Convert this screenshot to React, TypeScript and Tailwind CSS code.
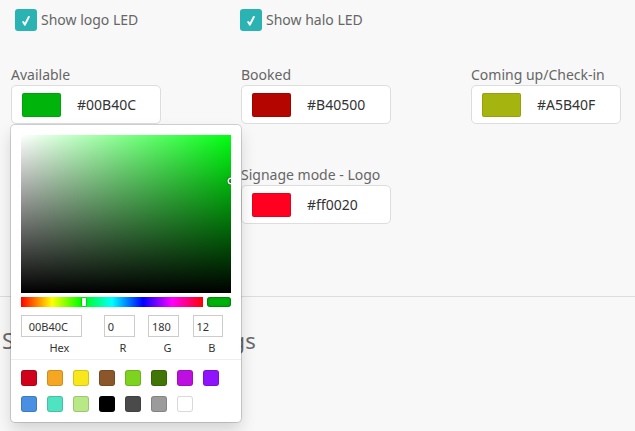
import React from "react";

function Check({ label, className = "" }: { label: string; className?: string }) {
  return (
    <div className={`flex items-center gap-[4px] ${className}`}>
      <div className="w-[22px] h-[22px] rounded-[3px] bg-[#2bb3b3] flex items-center justify-center">
        <svg width="22" height="22" viewBox="0 0 22 22">
          <path d="M8.2 13 L9.9 15.6 L13.8 8" fill="none" stroke="#fff" strokeWidth="2" strokeLinecap="round" strokeLinejoin="round" />
        </svg>
      </div>
      <span className="text-[14px] leading-[20px] text-[#666]">{label}</span>
    </div>
  );
}

function ColorField({ label, color, text }: { label: string; color: string; text: string }) {
  return (
    <div className="flex flex-col">
      <div className="h-[20px] leading-[20px] text-[14px] text-[#666]">{label}</div>
      <div className="w-[150px] h-[39px] bg-white border border-[#dddddd] rounded-[5px] flex items-center pl-[10px]">
        <div className="w-[39px] h-[24px] rounded-[2px] border border-black/10" style={{ backgroundColor: color }} />
        <span className="ml-[16px] text-[14px] text-[#333]">{text}</span>
      </div>
    </div>
  );
}

export default function App() {
  const presets = [
    "#D0021B", "#F5A623", "#F8E71C", "#8B572A", "#7ED321", "#417505", "#BD10E0", "#9013FE",
    "#4A90E2", "#50E3C2", "#B8E986", "#000000", "#4A4A4A", "#9B9B9B", "#FFFFFF",
  ];
  return (
    <div className="relative w-[635px] h-[431px] overflow-hidden bg-[#f8f8f8] font-['Noto_Sans',sans-serif] text-[#666]">
      <div className="flex pl-[15px] pt-[9px]">
        <Check label="Show logo LED" className="w-[225px]" />
        <Check label="Show halo LED" />
      </div>

      <div className="grid grid-cols-[230px_230px_150px] pl-[11px] mt-[34px] gap-y-[41px]">
        <ColorField label="Available" color="#00B40C" text="#00B40C" />
        <ColorField label="Booked" color="#B40500" text="#B40500" />
        <ColorField label="Coming up/Check-in" color="#A5B40F" text="#A5B40F" />
        <div />
        <ColorField label="Signage mode - Logo" color="#ff0020" text="#ff0020" />
      </div>

      <div className="mt-[72px] border-t border-[#dddddd]" />
      <div className="mt-[28px] pl-[2px] text-[22px] leading-[30px] tracking-[0.2px] text-[#6a6a6a]">Signage display settings</div>

      {/* Color picker popover */}
      <div className="absolute left-[11px] top-[125px] w-[230px] bg-white rounded-[4px] px-[10px] pt-[10px] shadow-[0_0_0_1px_rgba(0,0,0,0.15),0_8px_16px_rgba(0,0,0,0.15)]">
        <div className="relative w-[210px] h-[158px] overflow-hidden bg-[#00ff11]">
          <div className="absolute inset-0 bg-[linear-gradient(to_right,#fff,rgba(255,255,255,0))]" />
          <div className="absolute inset-0 bg-[linear-gradient(to_top,#000,rgba(0,0,0,0))]" />
          <div className="absolute left-[208px] top-[44px] w-[4px] h-[4px] rounded-full shadow-[0_0_0_1.5px_#fff,inset_0_0_1px_1px_rgba(0,0,0,0.3),0_0_1px_2px_rgba(0,0,0,0.4)]" />
        </div>
        <div className="flex py-[4px]">
          <div className="relative flex-1 h-[10px] overflow-hidden bg-[linear-gradient(to_right,#f00_0%,#ff0_17%,#0f0_33%,#0ff_50%,#00f_67%,#f0f_83%,#f00_100%)]">
            <div className="absolute left-[61px] top-[1px] w-[4px] h-[8px] rounded-[1px] bg-white shadow-[0_0_2px_rgba(0,0,0,0.6)]" />
          </div>
          <div className="ml-[4px] w-[24px] h-[10px] rounded-[3px] bg-[#00B40C] shadow-[inset_0_0_0_1px_rgba(0,0,0,0.15),inset_0_0_4px_rgba(0,0,0,0.25)]" />
        </div>
        <div className="flex pt-[4px] text-[11px] text-[#333]">
          {[
            { v: "00B40C", l: "Hex", grow: "flex-[2]", pad: "" },
            { v: "0", l: "R", grow: "flex-1", pad: "pl-[6px]" },
            { v: "180", l: "G", grow: "flex-1", pad: "pl-[6px]" },
            { v: "12", l: "B", grow: "flex-1", pad: "pl-[6px]" },
          ].map((f) => (
            <div key={f.l} className={`${f.grow} ${f.pad}`}>
              <div className="w-[80%] h-[22px] leading-[15px] pt-[4px] pb-[3px] px-[10%] shadow-[inset_0_0_0_1px_#ccc] bg-white">
                {f.v}
              </div>
              <div className="text-center pt-[3px] pb-[4px] leading-[15px]">{f.l}</div>
            </div>
          ))}
        </div>
        <div className="-mx-[10px] border-t border-[#eeeeee] pt-[10px] pl-[10px] flex flex-wrap">
          {presets.map((c) => (
            <div
              key={c}
              className="w-[16px] h-[16px] mr-[10px] mb-[10px] rounded-[3px] shadow-[inset_0_0_0_1px_rgba(0,0,0,0.15)]"
              style={{ backgroundColor: c }}
            />
          ))}
        </div>
      </div>
    </div>
  );
}
